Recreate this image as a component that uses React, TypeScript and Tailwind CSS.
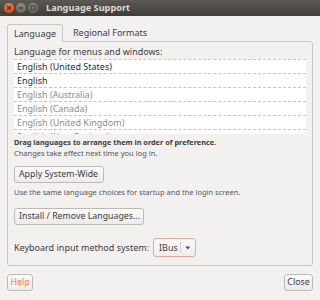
const font = { fontFamily: '"Noto Sans", "DejaVu Sans", sans-serif' };

const languages = [
  { name: "English (United States)", active: true },
  { name: "English", active: true },
  { name: "English (Australia)", active: false },
  { name: "English (Canada)", active: false },
  { name: "English (United Kingdom)", active: false },
  { name: "English (New Zealand)", active: false },
];

function WindowButtons() {
  return (
    <svg width="40" height="12" viewBox="0 0 40 12" className="ml-[3px]">
      <defs>
        <linearGradient id="close" x1="0" y1="0" x2="0" y2="1">
          <stop offset="0" stopColor="#f37a51" />
          <stop offset="1" stopColor="#df4a16" />
        </linearGradient>
        <linearGradient id="gray" x1="0" y1="0" x2="0" y2="1">
          <stop offset="0" stopColor="#8a8880" />
          <stop offset="1" stopColor="#6a6862" />
        </linearGradient>
      </defs>
      <circle cx="6" cy="6" r="5" fill="url(#close)" />
      <path d="M4.2 4.2 L7.8 7.8 M7.8 4.2 L4.2 7.8" stroke="#4a2a1c" strokeWidth="1.1" />
      <circle cx="18" cy="6" r="5" fill="url(#gray)" />
      <path d="M15.8 6 H20.2" stroke="#3c3b37" strokeWidth="1.2" />
      <circle cx="30" cy="6" r="5" fill="url(#gray)" />
      <rect x="27.8" y="3.8" width="4.4" height="4.4" fill="none" stroke="#3c3b37" strokeWidth="1" />
    </svg>
  );
}

function Button({ children, className = "" }: { children: React.ReactNode; className?: string }) {
  return (
    <div
      className={`h-[17px] flex items-center px-[4px] rounded-[3px] border border-[#bdbab4] bg-gradient-to-b from-[#fbfbfa] to-[#ecebe9] text-[8.8px] text-[#3c3c3c] leading-none whitespace-nowrap ${className}`}
    >
      {children}
    </div>
  );
}

export default function App() {
  return (
    <div className="w-[320px] h-[300px] bg-[#f2f1f0] flex flex-col overflow-hidden" style={font}>
      {/* title bar */}
      <div className="h-[16px] bg-gradient-to-b from-[#5c5a52] to-[#3e3d39] flex items-center">
        <WindowButtons />
        <span className="ml-[3px] text-[9.2px] font-bold text-[#dfdbd2] leading-none">Language Support</span>
      </div>

      <div className="px-[7px] pt-[8px] flex flex-col">
        {/* tabs */}
        <div className="flex items-end h-[17px]">
          <div className="w-[56px] h-[18px] -mb-px border border-b-0 border-[#c9c6c1] rounded-t-[3px] bg-[#f2f1f0] flex items-center justify-center text-[9px] text-[#3c3c3c] relative z-10">
            Language
          </div>
          <div className="ml-[10px] h-[17px] flex items-center text-[9px] text-[#3c3c3c]">Regional Formats</div>
        </div>

        {/* frame */}
        <div className="h-[225px] border border-[#c9c6c1] rounded-b-[3px] rounded-tr-[3px] px-[6px] pt-[3px] flex flex-col">
          <div className="h-[14px] flex items-center text-[9px] text-[#3c3c3c]">Language for menus and windows:</div>
          <div className="h-[75px] bg-white overflow-hidden">
            {languages.map((l) => (
              <div
                key={l.name}
                className={`h-[14px] border-t border-dashed border-[#c4c4c4] flex items-center pl-[3px] text-[9px] leading-none ${
                  l.active ? "text-[#2e2e2e]" : "text-[#8c8c8c]"
                }`}
              >
                {l.name}
              </div>
            ))}
          </div>
          <div className="mt-[3px] h-[11px] flex items-center text-[7.3px] font-bold text-[#3c3c3c]">
            Drag languages to arrange them in order of preference.
          </div>
          <div className="h-[11px] flex items-center text-[7.5px] text-[#555]">Changes take effect next time you log in.</div>
          <Button className="mt-[7px] w-[90px]">Apply System-Wide</Button>
          <div className="mt-[4px] h-[11px] flex items-center text-[7.5px] text-[#555]">
            Use the same language choices for startup and the login screen.
          </div>
          <Button className="mt-[10px] w-[130px]">Install / Remove Languages...</Button>
          <div className="mt-[13px] flex items-center">
            <span className="text-[9px] text-[#3c3c3c] w-[139px]">Keyboard input method system:</span>
            <div className="h-[19px] w-[43px] flex items-center rounded-[3px] border border-[#e4ab91] bg-gradient-to-b from-[#fbfbfa] to-[#efeeec]">
              <span className="pl-[5px] w-[27px] text-[9px] text-[#3c3c3c]">IBus</span>
              <div className="h-[11px] w-px bg-[#cfcdc9]" />
              <svg width="14" height="8" viewBox="0 0 14 8">
                <path d="M4.5 2.5 H9.5 L7 5.5 Z" fill="#4a4a4a" />
              </svg>
            </div>
          </div>
        </div>

        {/* bottom buttons */}
        <div className="mt-[8px] flex justify-between">
          <Button className="w-[26px] justify-center text-[#f0775a]">Help</Button>
          <Button className="w-[29px] justify-center px-0">Close</Button>
        </div>
      </div>
    </div>
  );
}
